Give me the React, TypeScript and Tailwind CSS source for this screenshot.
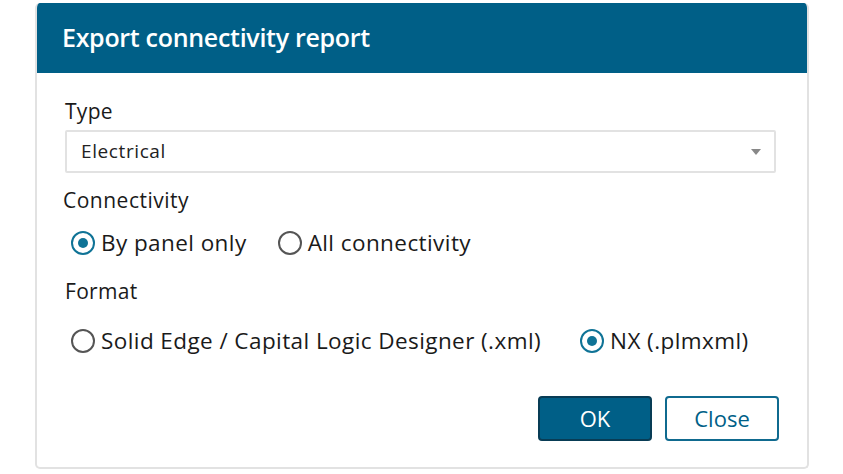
import { useState } from "react";

const FONT = { fontFamily: '"Open Sans", "Noto Sans", sans-serif' };

function Radio({ checked, label, onClick }: { checked: boolean; label: string; onClick: () => void }) {
  return (
    <button type="button" onClick={onClick} className="flex items-center gap-[6px] text-[22.5px] leading-[30px] text-[#1a1a1a]">
      <span
        className={`flex h-[24px] w-[24px] items-center justify-center rounded-full border-2 ${
          checked ? "border-[#0f7396]" : "border-[#555]"
        }`}
      >
        {checked && <span className="h-[10px] w-[10px] rounded-full bg-[#0f7396]" />}
      </span>
      <span className="tracking-[0.42px]">{label}</span>
    </button>
  );
}

export default function App() {
  const [conn, setConn] = useState("panel");
  const [format, setFormat] = useState("nx");

  return (
    <div className="h-[474px] w-[843px] bg-white pl-[35px] pt-[3px]" style={FONT}>
      <div className="w-[774px] overflow-hidden rounded-[5px] border-x-2 border-b-2 border-[#e2e2e2] bg-white">
        <div className="-mx-[2px] flex h-[70px] items-center bg-[#005f87] px-[27px]">
          <h1 className="text-[25px] font-semibold tracking-[-0.3px] text-white">Export connectivity report</h1>
        </div>

        <div className="px-[28px] pt-[24px] pb-[26px]">
          <div className="text-[21px] leading-[28px] tracking-[0.3px] text-[#1a1a1a]">Type</div>
          <div className="mr-[3px] mt-[5px] flex h-[43px] items-center justify-between rounded-[2px] border-2 border-[#e2e2e2] pl-[14px] pr-[13px]">
            <span className="text-[19px] tracking-[0.6px] text-[#222]">Electrical</span>
            <svg width="10" height="6" viewBox="0 0 10 6">
              <path d="M0 0 H10 L5 6 Z" fill="#888" />
            </svg>
          </div>

          <div className="-ml-[2px] mt-[13px] text-[21px] leading-[28px] tracking-[0.5px] text-[#1a1a1a]">Connectivity</div>
          <div className="ml-[6px] mt-[14px] flex items-center gap-[31px]">
            <Radio checked={conn === "panel"} label="By panel only" onClick={() => setConn("panel")} />
            <Radio checked={conn === "all"} label="All connectivity" onClick={() => setConn("all")} />
          </div>

          <div className="mt-[19px] text-[21px] leading-[28px] tracking-[0.3px] text-[#1a1a1a]">Format</div>
          <div className="ml-[6px] mt-[21px] flex items-center gap-[39px]">
            <Radio checked={format === "se"} label="Solid Edge / Capital Logic Designer (.xml)" onClick={() => setFormat("se")} />
            <Radio checked={format === "nx"} label="NX (.plmxml)" onClick={() => setFormat("nx")} />
          </div>

          <div className="mt-[40px] flex justify-end gap-[13px]">
            <button className="h-[45px] w-[114px] rounded-[4px] border-2 border-[#083c55] bg-[#005f87] text-[22px] text-white">
              OK
            </button>
            <button className="h-[45px] w-[114px] rounded-[4px] border-2 border-[#0f6a8f] bg-white text-[22px] text-[#005f87]">
              Close
            </button>
          </div>
        </div>
      </div>
    </div>
  );
}
